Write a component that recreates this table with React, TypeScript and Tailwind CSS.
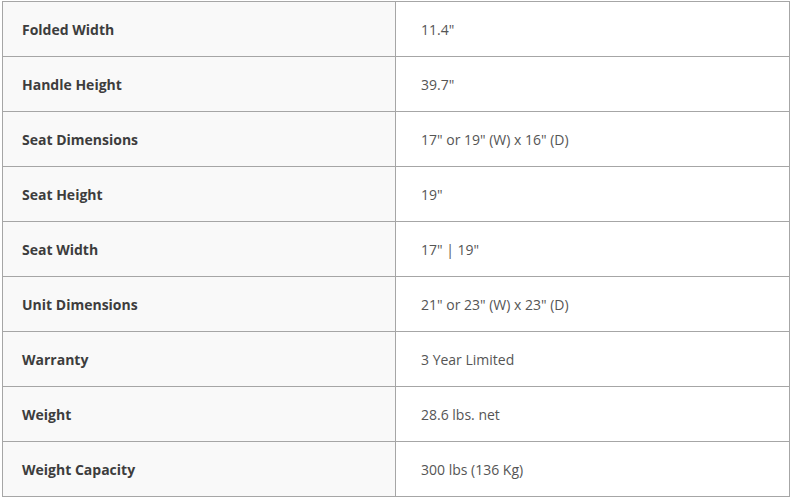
import React from 'react';

const specs: [string, string][] = [
  ['Folded Width', '11.4"'],
  ['Handle Height', '39.7"'],
  ['Seat Dimensions', '17" or 19" (W) x 16" (D)'],
  ['Seat Height', '19"'],
  ['Seat Width', '17" | 19"'],
  ['Unit Dimensions', '21" or 23" (W) x 23" (D)'],
  ['Warranty', '3 Year Limited'],
  ['Weight', '28.6 lbs. net'],
  ['Weight Capacity', '300 lbs (136 Kg)'],
];

export default function App() {
  return (
    <div className="w-[797px] h-[501px] bg-white pt-[1px] pl-[2px]" style={{ fontFamily: '"Open Sans", sans-serif' }}>
      <table className="w-[788px] border-collapse text-[14px]">
        <tbody>
          {specs.map(([label, value]) => (
            <tr key={label} className="h-[55px]">
              <td className="w-[393px] border border-[#a6a6a6] bg-[#f9f9f9] pl-[19px] font-bold text-[#3d3d3d]">
                {label}
              </td>
              <td className="border border-[#a6a6a6] bg-white pl-[25px] text-[#555555]">{value}</td>
            </tr>
          ))}
        </tbody>
      </table>
    </div>
  );
}
